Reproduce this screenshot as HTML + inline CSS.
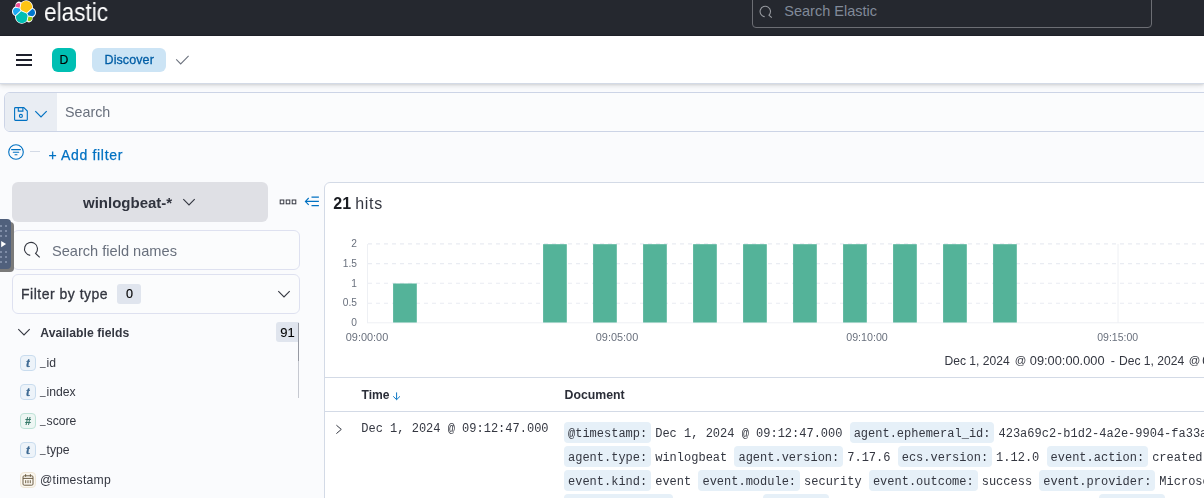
<!DOCTYPE html>
<html lang="en">
<head>
<meta charset="utf-8">
<title>Discover - Elastic</title>
<style>
*{box-sizing:border-box;margin:0;padding:0}
html,body{width:1204px;height:498px;overflow:hidden;background:#FAFBFD}
body{position:relative;font-family:"Liberation Sans",sans-serif;color:#343741;font-size:14px}
#main{position:absolute;left:0;top:0;width:1204px;height:498px;will-change:transform}
.abs{position:absolute}
.t{position:absolute;white-space:nowrap;line-height:1}
.mono{font-family:"Liberation Mono",monospace;font-size:12px}
/* top dark header */
#hdr1{position:absolute;left:0;top:0;width:1204px;height:36px;background:#25282F;border-bottom:1px solid #1f2129}
#hdr2{position:absolute;left:0;top:36px;width:1204px;height:48px;background:#fff;border-bottom:1px solid #D3DAE6;box-shadow:0 2px 5px rgba(0,0,0,.11),0 1px 2px rgba(0,0,0,.08)}
/* sidebar */
.fld{position:absolute;left:20px;width:16px;height:16px;border-radius:4px;border:1px solid #C9DCEE;background:#EDF3F9}
.fld.num{border-color:#BEE2D7;background:#EDF6F3}
.fld.date{border-color:#EEE5D5;background:#FBF7EF}
.fld span{position:absolute;left:0;top:0;width:14px;height:14px;line-height:14px;text-align:center;font-family:"Liberation Serif",serif;font-weight:bold;font-style:italic;font-size:12px;color:#3E6A93;-webkit-text-stroke:.35px #3E6A93}
.fld.num span{color:#38796A;font-family:"Liberation Sans",sans-serif;font-size:10.5px;-webkit-text-stroke:.2px #38796A}
.us{position:relative;top:-1.4px;font-size:10px;margin-right:1px}
.fname{position:absolute;left:40px;font-size:12.2px;line-height:14px;white-space:nowrap;color:#343741}
/* doc pills */
.row{position:absolute;left:564px;white-space:nowrap;height:20px;line-height:20px;font-family:"Liberation Mono",monospace;font-size:12px;color:#343741}
.row dt{display:inline;padding:4.5px 4px 2.2px;margin-right:4px;background:#E6F0F8;border-radius:4px}
.row dd{display:inline}
</style>
</head>
<body>

<!-- ===== dark header ===== -->
<div id="hdr1">
  <svg class="abs" style="left:12px;top:0" width="24" height="24" viewBox="0 0 32 32">
    <path fill="#FFF" d="M32 16.77a6.334 6.334 0 00-1.14-3.63 6.298 6.298 0 00-3.049-2.325 9.118 9.118 0 00-.903-5.58A9.067 9.067 0 0022.74 1.4a9.02 9.02 0 00-5.574-.763 9.053 9.053 0 00-4.93 2.73 4.794 4.794 0 00-5.908-.135A4.837 4.837 0 004.75 5.55a4.864 4.864 0 00-.076 2.92 6.401 6.401 0 00-3.044 2.337A6.44 6.44 0 000 15.24c0 1.302.397 2.573 1.137 3.642a6.352 6.352 0 003.057 2.332 9.106 9.106 0 00.9 5.578 9.055 9.055 0 004.166 3.837 9.007 9.007 0 005.57.765 9.04 9.04 0 004.927-2.722 4.783 4.783 0 005.897.125 4.827 4.827 0 001.573-2.316 4.854 4.854 0 00.076-2.912 6.403 6.403 0 003.05-2.337A6.443 6.443 0 0032 16.77"/>
    <path fill="#FEC514" d="M12.58 13.787l7.002 3.211 7.066-6.213a7.849 7.849 0 00.152-1.557c0-1.692-.539-3.34-1.54-4.704a7.897 7.897 0 00-4.02-2.869 7.87 7.87 0 00-4.932.086 7.9 7.9 0 00-3.92 3.007l-1.174 6.118 1.367 2.92-.001.001z"/>
    <path fill="#00BFB3" d="M5.333 21.228a7.964 7.964 0 001.39 6.275 7.917 7.917 0 004.041 2.874 7.89 7.89 0 004.95-.097 7.92 7.92 0 003.926-3.03l1.166-6.102-1.555-2.985-7.03-3.211-6.888 6.276z"/>
    <path fill="#F04E98" d="M5.288 9.067l4.8 1.137L11.14 4.74a3.785 3.785 0 00-4.538-.056A3.812 3.812 0 005.253 6.56a3.835 3.835 0 00.035 2.507"/>
    <path fill="#1BA9F5" d="M4.872 10.214a5.294 5.294 0 00-2.595 1.882 5.324 5.324 0 00-.142 6.124 5.287 5.287 0 002.505 2l6.733-6.101-1.235-2.65-5.266-1.255z"/>
    <path fill="#93C90E" d="M20.873 27.277a3.736 3.736 0 004.549.056 3.806 3.806 0 001.313-4.373l-4.8-1.125-1.062 5.442z"/>
    <path fill="#07C" d="M21.848 20.563l5.284 1.24a5.34 5.34 0 002.595-1.884 5.371 5.371 0 001.045-3.146 5.327 5.327 0 00-3.438-4.976l-6.91 6.075 1.424 2.691z"/>
  </svg>
  <div class="t" id="elastic" style="left:44.2px;top:-0.5px;font-size:25px;color:#fff;transform-origin:0 0;transform:scaleX(.905);will-change:transform">elastic</div>

  <div class="abs" style="left:752px;top:-4px;width:400px;height:32px;border:1px solid #6C6E74;border-radius:4px"></div>
  <svg class="abs" style="left:758px;top:4px" width="16" height="16" viewBox="0 0 16 16" fill="none" stroke="#96999F" stroke-width="1.1">
    <path d="M6.67 12.66A5.2 5.2 0 1 1 10.98 11.18L13.8 13.7"/>
  </svg>
  <div class="t" style="left:784.3px;top:4.3px;font-size:14.5px;color:#818A99">Search Elastic</div>
</div>

<div id="main">
<!-- ===== second header ===== -->
<div id="hdr2">
  <div class="abs" style="left:16px;top:18px;width:16px;height:2px;background:#1e202c"></div>
  <div class="abs" style="left:16px;top:23px;width:16px;height:2px;background:#1e202c"></div>
  <div class="abs" style="left:16px;top:28px;width:16px;height:2px;background:#1e202c"></div>
  <div class="abs" style="left:52px;top:12px;width:24px;height:24px;border-radius:6px;background:#00BFB3"></div>
  <div class="t" style="left:52px;top:18px;width:24px;text-align:center;font-size:12.2px;color:#000;-webkit-text-stroke:.15px #000">D</div>
  <div class="abs" style="left:92px;top:12px;width:74px;height:24px;border-radius:6px;background:#CCE4F5"></div>
  <div class="t" style="left:104.5px;top:18px;font-size:12.5px;color:#005EA6;-webkit-text-stroke:.3px #005EA6;letter-spacing:.1px">Discover</div>
  <svg class="abs" style="left:174px;top:16px" width="16" height="16" viewBox="0 0 16 16" fill="none" stroke="#6C727E" stroke-width="1.05"><path d="M2.2 7.4 6.7 11.9 14.6 3.9"/></svg>
</div>

<!-- ===== query bar ===== -->
<div class="abs" style="left:4px;top:92px;width:1300px;height:40px;border:1px solid #CCD4E6;border-radius:6px;background:#FBFCFD"></div>
<div class="abs" style="left:5px;top:93px;width:52px;height:38px;border-radius:5px 0 0 5px;background:#E9EDF3"></div>
<svg class="abs" style="left:13px;top:106px" width="16" height="16" viewBox="0 0 16 16" fill="none" stroke="#0071C2" stroke-width="1.1">
  <path d="M2.4 1.6h8.4l3.5 3.4v8.6q0 .8-.8.8H2.4q-.8 0-.8-.8V2.4q0-.8.8-.8z"/><path d="M5.3 1.6v3.5h4.6V1.6"/><circle cx="7.9" cy="9.9" r="1.5"/>
</svg>
<svg class="abs" style="left:33px;top:106px" width="16" height="16" viewBox="0 0 16 16" fill="none" stroke="#0071C2" stroke-width="1.2"><path d="M2.3 5.2 8 11 13.7 5.2"/></svg>
<div class="t" style="left:65px;top:104.5px;font-size:14.3px;color:#69707D">Search</div>

<!-- filter row -->
<svg class="abs" style="left:8px;top:144px" width="16" height="16" viewBox="0 0 16 16" fill="none" stroke="#0071C2" stroke-width="1.1">
  <circle cx="8" cy="8" r="7.3"/><path d="M3.6 5.6h8.8M5.3 8.2h5.4M7 10.8h2" stroke-linecap="round"/>
</svg>
<div class="abs" style="left:30px;top:151px;width:10px;height:1px;background:#D3DAE6"></div>
<div class="t" style="left:48.5px;top:147.5px;font-size:14px;color:#0071C2;letter-spacing:.66px;-webkit-text-stroke:.25px #0071C2">+ Add filter</div>

<!-- ===== sidebar ===== -->
<div class="abs" style="left:12px;top:182px;width:256px;height:40px;border-radius:6px;background:#DFE0E5"></div>
<div class="t" style="left:83px;top:194.5px;font-size:15px;font-weight:bold;color:#30333E">winlogbeat-*</div>
<svg class="abs" style="left:181px;top:194px" width="16" height="16" viewBox="0 0 16 16" fill="none" stroke="#343741" stroke-width="1.1"><path d="M2.3 5.2 8 11 13.7 5.2"/></svg>

<svg class="abs" style="left:279px;top:194px" width="18" height="16" viewBox="0 0 18 16" fill="none" stroke="#343741" stroke-width="1"><rect x="1.2" y="6" width="3.6" height="3.8"/><rect x="7.2" y="6" width="3.6" height="3.8"/><rect x="13.2" y="6" width="3.6" height="3.8"/></svg>
<svg class="abs" style="left:304px;top:194px" width="16" height="16" viewBox="0 0 16 16" fill="none" stroke="#0071C2" stroke-width="1.1"><path d="M7.5 3.1h7.4M1.8 7.4h13.1M7.5 11.6h7.4M4.7 4 1.4 7.4 4.7 10.8"/></svg>

<!-- left dev tab -->
<div class="abs" style="left:0;top:219px;width:10.5px;height:50px;border-radius:0 4px 4px 0;background:#50607C;box-shadow:3px 3px 0 #7a7a7a,0 3px 0 #7a7a7a;z-index:5"></div>
<svg class="abs" style="left:0;top:219px;z-index:6" width="11" height="50" viewBox="0 0 11 50" fill="#7E8CA6">
  <rect x="0" y="6" width="2" height="2"/><rect x="5" y="6" width="2" height="2"/>
  <rect x="0" y="11" width="2" height="2"/><rect x="5" y="11" width="2" height="2"/>
  <rect x="0" y="16" width="2" height="2"/><rect x="5" y="16" width="2" height="2"/>
  <rect x="0" y="32" width="2" height="2"/><rect x="5" y="32" width="2" height="2"/>
  <rect x="0" y="37" width="2" height="2"/><rect x="5" y="37" width="2" height="2"/>
  <rect x="0" y="42" width="2" height="2"/><rect x="5" y="42" width="2" height="2"/>
  <path d="M1.2 21.9v6.4l4.9-3.2z" fill="#fff"/>
</svg>

<div class="abs" style="left:12px;top:230px;width:288px;height:40px;border:1px solid #DEE1F0;border-radius:6px;background:#FBFCFD"></div>
<svg class="abs" style="left:22px;top:241px" width="20" height="20" viewBox="0 0 20 20" fill="none" stroke="#343741" stroke-width="1.1">
  <path d="M8.21 14.35A6.5 6.5 0 1 1 13.6 12.5L17.7 16.4"/>
</svg>
<div class="t" style="left:52px;top:243.5px;font-size:14.6px;color:#69707D">Search field names</div>

<div class="abs" style="left:12px;top:274px;width:288px;height:40px;border:1px solid #DEE1F0;border-radius:6px;background:#FBFCFD"></div>
<div class="t" style="left:21px;top:287.2px;font-size:14px;color:#343741;letter-spacing:.5px;-webkit-text-stroke:.3px #343741">Filter by type</div>
<div class="abs" style="left:117px;top:284px;width:24px;height:19.5px;border-radius:3px;background:#E0E5EE"></div>
<div class="t" style="left:117.5px;top:288px;width:24px;text-align:center;font-size:12.6px;color:#000;-webkit-text-stroke:.15px #000">0</div>
<svg class="abs" style="left:276px;top:286px" width="16" height="16" viewBox="0 0 16 16" fill="none" stroke="#343741" stroke-width="1.1"><path d="M2.3 5.2 8 11 13.7 5.2"/></svg>

<svg class="abs" style="left:16px;top:324px" width="16" height="16" viewBox="0 0 16 16" fill="none" stroke="#343741" stroke-width="1.1"><path d="M2.3 5.2 8 11 13.7 5.2"/></svg>
<div class="t" style="left:40.3px;top:326.8px;font-size:12.2px;letter-spacing:.04px;font-weight:bold;color:#343741">Available fields</div>
<div class="abs" style="left:276px;top:322px;width:22.5px;height:20px;border-radius:3px 0 0 3px;background:#E0E5EE"></div>
<div class="t" style="left:280.3px;top:326.3px;font-size:13px;color:#000;-webkit-text-stroke:.1px #000">91</div>
<div class="abs" style="left:298px;top:323px;width:1px;height:38px;background:#9699A2"></div>
<div class="abs" style="left:298px;top:361px;width:1px;height:37px;background:#C6C9D1"></div>

<div class="fld" style="top:355px"><span>t</span></div><div class="fname" style="top:356px"><span class="us">_</span>id</div>
<div class="fld" style="top:384px"><span>t</span></div><div class="fname" style="top:385px"><span class="us">_</span>index</div>
<div class="fld num" style="top:413px"><span>#</span></div><div class="fname" style="top:414px"><span class="us">_</span>score</div>
<div class="fld" style="top:442px"><span>t</span></div><div class="fname" style="top:443px"><span class="us">_</span>type</div>
<div class="fld date" style="top:471.6px">
  <svg class="abs" style="left:0;top:0" width="14" height="14" viewBox="0 0 14 14" fill="none" stroke="#6D5F46" stroke-width="1"><rect x="2" y="2.8" width="10" height="9.4" rx="1.2"/><path d="M2 5.4h10M4.6 1.2v2.6M9.4 1.2v2.6M4.7 7.2v3M7 7.2v3M9.3 7.2v3"/></svg>
</div><div class="fname" style="top:473.2px;letter-spacing:.24px">@timestamp</div>

<!-- ===== main panel ===== -->
<div class="abs" style="left:324px;top:182px;width:1000px;height:400px;border:1px solid #D3DAE6;border-radius:6px;background:#fff"></div>
<div class="t" style="left:333.3px;top:195.7px;font-size:16px;color:#1a1c21"><b>21</b> <span style="letter-spacing:.7px;margin-left:-.3px;color:#343741">hits</span></div>

<!-- chart -->
<svg class="abs" style="left:324px;top:230px" width="880" height="120" viewBox="324 230 880 120">
  <g stroke="#E9ECF2" stroke-width="1.1" stroke-dasharray="4 4">
    <path d="M368 243.9H1204M368 263.6H1204M368 283.3H1204M368 303.2H1204"/>
  </g>
  <path d="M367.5 244V323M367 322.8H1204M1118 244V323" stroke="#EEF0F4" stroke-width="1" fill="none"/>
  <g fill="#54B399">
    <rect x="393.1" y="283.5" width="23.7" height="39"/>
    <rect x="543.1" y="244.2" width="23.7" height="78.3"/>
    <rect x="593.1" y="244.2" width="23.7" height="78.3"/>
    <rect x="643.1" y="244.2" width="23.7" height="78.3"/>
    <rect x="693.1" y="244.2" width="23.7" height="78.3"/>
    <rect x="743.1" y="244.2" width="23.7" height="78.3"/>
    <rect x="793.1" y="244.2" width="23.7" height="78.3"/>
    <rect x="843.1" y="244.2" width="23.7" height="78.3"/>
    <rect x="893.1" y="244.2" width="23.7" height="78.3"/>
    <rect x="943.1" y="244.2" width="23.7" height="78.3"/>
    <rect x="993.1" y="244.2" width="23.7" height="78.3"/>
  </g>
  <g font-family="Liberation Sans, sans-serif" font-size="10.2" fill="#69707D">
    <g text-anchor="end">
      <text x="357" y="247">2</text>
      <text x="357" y="266.7">1.5</text>
      <text x="357" y="286.5">1</text>
      <text x="357" y="306">0.5</text>
      <text x="357" y="325.7">0</text>
    </g>
    <g text-anchor="middle" font-size="10.5">
      <text x="367" y="341" font-size="10.9">09:00:00</text>
      <text x="617" y="341" font-size="10.9">09:05:00</text>
      <text x="867" y="341" font-size="10.7">09:10:00</text>
      <text x="1117.7" y="341">09:15:00</text>
    </g>
  </g>
</svg>
<div class="t" style="left:944.5px;top:354.8px;font-size:12.1px;color:#343741">Dec 1, 2024 <span class="t" style="left:70.3px;top:.3px;font-size:11.4px">@</span><span class="t" style="left:85.3px;top:-.3px;font-size:12.8px">09:00:00.000</span><span class="t" style="left:166.2px;top:0;font-size:12.5px">-</span><span class="t" style="left:174.5px;top:0">Dec 1, 2024</span><span class="t" style="left:244.3px;top:.3px;font-size:11.4px">@</span><span class="t" style="left:257.8px;top:-.3px;font-size:12.8px">09:15:00.000</span></div>

<!-- table -->
<div class="abs" style="left:325px;top:377px;width:900px;height:1px;background:#D3DAE6"></div>
<div class="abs" style="left:325px;top:411px;width:900px;height:1px;background:#D3DAE6"></div>
<div class="t" style="left:361.5px;top:388.5px;font-size:12.1px;font-weight:bold;color:#2b2e38">Time</div>
<svg class="abs" style="left:391.4px;top:390.2px" width="12" height="12" viewBox="0 0 12 12" fill="none" stroke="#0071C2" stroke-width=".95"><path d="M5.6 2.4v7.2M2.2 6.3l3.4 3.4 3.4-3.4"/></svg>
<div class="t" style="left:564.5px;top:388.5px;font-size:12.3px;font-weight:bold;color:#2b2e38">Document</div>

<svg class="abs" style="left:331px;top:421px" width="16" height="16" viewBox="0 0 16 16" fill="none" stroke="#343741" stroke-width="1.1"><path d="M5.4 4.2 10.3 8.4 5.4 12.6" stroke-width="1"/></svg>
<div class="t mono" style="left:361.3px;top:423.4px">Dec 1, 2024 @ 09:12:47.000</div>

<dl class="row" style="top:423.5px"><dt>@timestamp:</dt><dd>Dec 1, 2024 @ 09:12:47.000</dd> <dt>agent.ephemeral_id:</dt><dd>423a69c2-b1d2-4a2e-9904-fa33a7c5e0d1</dd></dl>
<dl class="row" style="top:447.5px"><dt>agent.type:</dt><dd>winlogbeat</dd> <dt>agent.version:</dt><dd>7.17.6</dd> <dt>ecs.version:</dt><dd>1.12.0</dd> <dt>event.action:</dt><dd>created-process</dd></dl>
<dl class="row" style="top:471.5px"><dt>event.kind:</dt><dd>event</dd> <dt>event.module:</dt><dd>security</dd> <dt>event.outcome:</dt><dd>success</dd> <dt>event.provider:</dt><dd>Microsoft-Windows-Security-Auditing</dd></dl>
<dl class="row" style="top:495.5px"><dt>host.hostname:</dt><dd>WIN-SRV-001</dd> <dt>host.id:</dt><dd>8f14e45f-ceea-467f-a9b3-2d1c6f0e7a42</dd> <dt>host.ip:</dt><dd>10.0.0.15</dd></dl>
</div>
</body>
</html>
